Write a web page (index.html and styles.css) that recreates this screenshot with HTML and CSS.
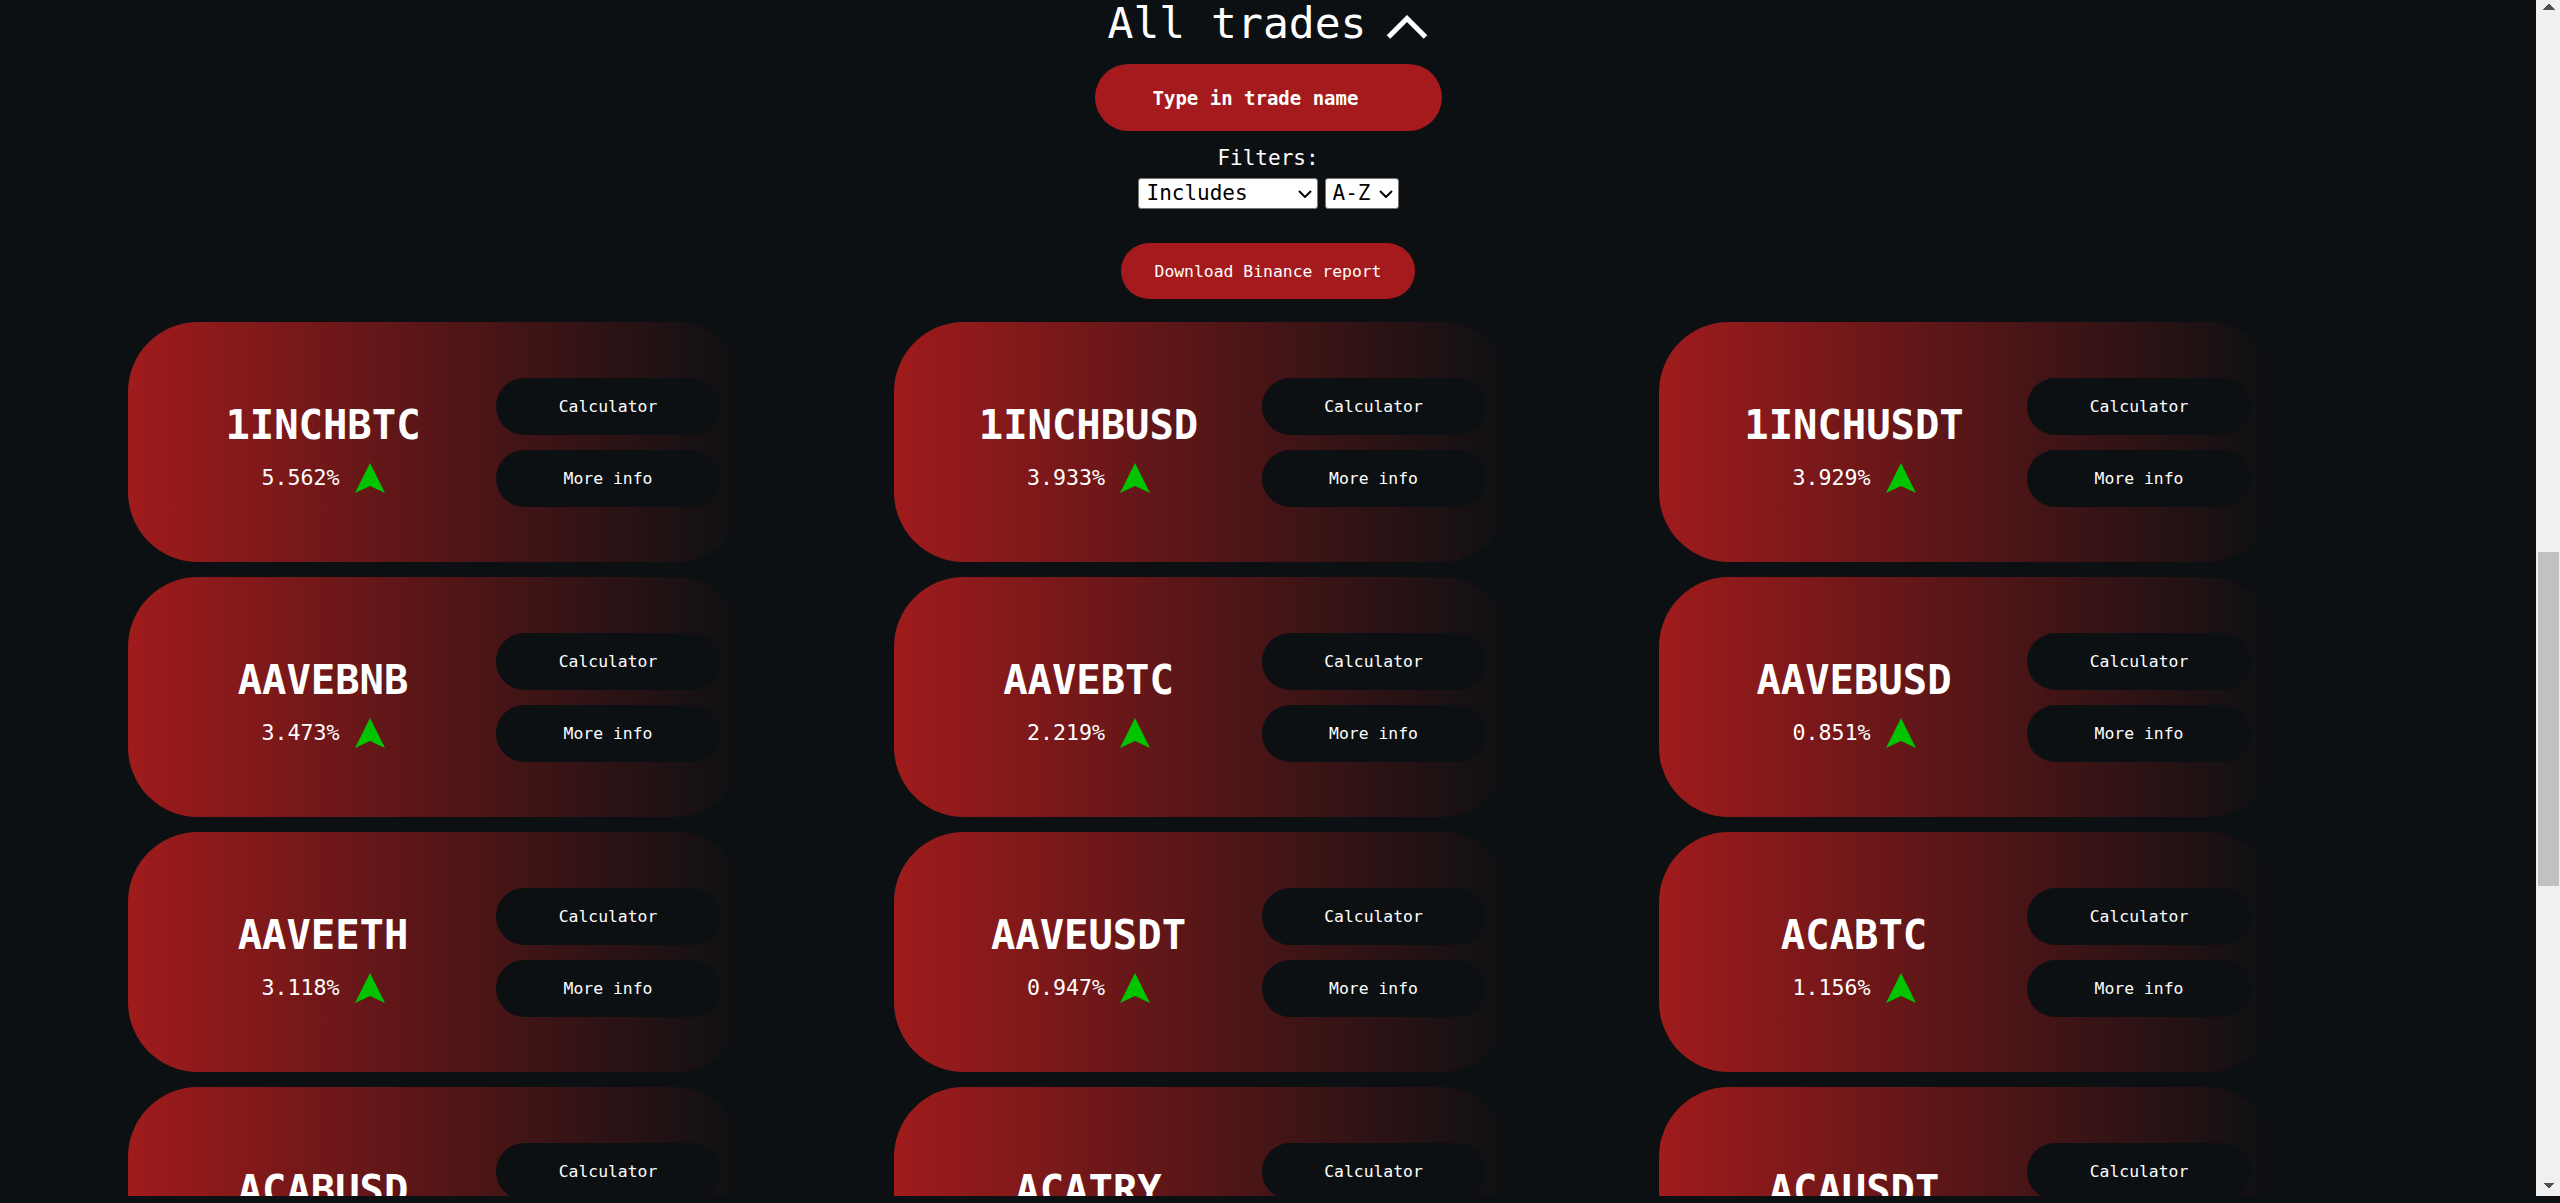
FILE: index.html
```html
<!DOCTYPE html>
<html lang="en">
<head>
<meta charset="utf-8">
<title>All trades</title>
<link rel="stylesheet" href="styles.css">
</head>
<body>
<div class="window">
  <main class="viewport">
    <section class="trades">
      <h2 class="trades-title"><span>All trades</span><svg class="chevron" viewBox="0 0 42 26" aria-hidden="true"><polyline points="2.5,23 21,4.5 39.5,23" fill="none" stroke="#fff" stroke-width="5" stroke-linejoin="miter" stroke-linecap="butt"/></svg></h2>
      <input class="search" type="text" placeholder="Type in trade name">
      <div class="filters-label">Filters:</div>
      <div class="filters">
        <span class="select-wrap">
          <select class="filter-select filter-type">
            <option>Includes</option>
            <option>Starts with</option>
            <option>Ends with</option>
          </select>
          <svg class="select-arrow" viewBox="0 0 14 8" aria-hidden="true"><polyline points="1,1 7,7 13,1" fill="none" stroke="#000" stroke-width="2"/></svg>
        </span>
        <span class="select-wrap">
          <select class="filter-select filter-order">
            <option>A-Z</option>
            <option>Z-A</option>
          </select>
          <svg class="select-arrow" viewBox="0 0 14 8" aria-hidden="true"><polyline points="1,1 7,7 13,1" fill="none" stroke="#000" stroke-width="2"/></svg>
        </span>
      </div>
      <button class="download" type="button">Download Binance report</button>

      <div class="grid">
        <div class="card">
          <div class="card-info"><div class="card-name">1INCHBTC</div><div class="card-change"><span>5.562%</span><svg class="trend-up" viewBox="0 0 30 30"><polygon points="15,0 30,30 15,23 0,30"/></svg></div></div>
          <div class="card-actions"><button class="card-btn" type="button">Calculator</button><button class="card-btn" type="button">More info</button></div>
        </div>
        <div class="card">
          <div class="card-info"><div class="card-name">1INCHBUSD</div><div class="card-change"><span>3.933%</span><svg class="trend-up" viewBox="0 0 30 30"><polygon points="15,0 30,30 15,23 0,30"/></svg></div></div>
          <div class="card-actions"><button class="card-btn" type="button">Calculator</button><button class="card-btn" type="button">More info</button></div>
        </div>
        <div class="card">
          <div class="card-info"><div class="card-name">1INCHUSDT</div><div class="card-change"><span>3.929%</span><svg class="trend-up" viewBox="0 0 30 30"><polygon points="15,0 30,30 15,23 0,30"/></svg></div></div>
          <div class="card-actions"><button class="card-btn" type="button">Calculator</button><button class="card-btn" type="button">More info</button></div>
        </div>

        <div class="card">
          <div class="card-info"><div class="card-name">AAVEBNB</div><div class="card-change"><span>3.473%</span><svg class="trend-up" viewBox="0 0 30 30"><polygon points="15,0 30,30 15,23 0,30"/></svg></div></div>
          <div class="card-actions"><button class="card-btn" type="button">Calculator</button><button class="card-btn" type="button">More info</button></div>
        </div>
        <div class="card">
          <div class="card-info"><div class="card-name">AAVEBTC</div><div class="card-change"><span>2.219%</span><svg class="trend-up" viewBox="0 0 30 30"><polygon points="15,0 30,30 15,23 0,30"/></svg></div></div>
          <div class="card-actions"><button class="card-btn" type="button">Calculator</button><button class="card-btn" type="button">More info</button></div>
        </div>
        <div class="card">
          <div class="card-info"><div class="card-name">AAVEBUSD</div><div class="card-change"><span>0.851%</span><svg class="trend-up" viewBox="0 0 30 30"><polygon points="15,0 30,30 15,23 0,30"/></svg></div></div>
          <div class="card-actions"><button class="card-btn" type="button">Calculator</button><button class="card-btn" type="button">More info</button></div>
        </div>

        <div class="card">
          <div class="card-info"><div class="card-name">AAVEETH</div><div class="card-change"><span>3.118%</span><svg class="trend-up" viewBox="0 0 30 30"><polygon points="15,0 30,30 15,23 0,30"/></svg></div></div>
          <div class="card-actions"><button class="card-btn" type="button">Calculator</button><button class="card-btn" type="button">More info</button></div>
        </div>
        <div class="card">
          <div class="card-info"><div class="card-name">AAVEUSDT</div><div class="card-change"><span>0.947%</span><svg class="trend-up" viewBox="0 0 30 30"><polygon points="15,0 30,30 15,23 0,30"/></svg></div></div>
          <div class="card-actions"><button class="card-btn" type="button">Calculator</button><button class="card-btn" type="button">More info</button></div>
        </div>
        <div class="card">
          <div class="card-info"><div class="card-name">ACABTC</div><div class="card-change"><span>1.156%</span><svg class="trend-up" viewBox="0 0 30 30"><polygon points="15,0 30,30 15,23 0,30"/></svg></div></div>
          <div class="card-actions"><button class="card-btn" type="button">Calculator</button><button class="card-btn" type="button">More info</button></div>
        </div>

        <div class="card">
          <div class="card-info"><div class="card-name">ACABUSD</div><div class="card-change"><span>1.204%</span><svg class="trend-up" viewBox="0 0 30 30"><polygon points="15,0 30,30 15,23 0,30"/></svg></div></div>
          <div class="card-actions"><button class="card-btn" type="button">Calculator</button><button class="card-btn" type="button">More info</button></div>
        </div>
        <div class="card">
          <div class="card-info"><div class="card-name">ACATRY</div><div class="card-change"><span>1.371%</span><svg class="trend-up" viewBox="0 0 30 30"><polygon points="15,0 30,30 15,23 0,30"/></svg></div></div>
          <div class="card-actions"><button class="card-btn" type="button">Calculator</button><button class="card-btn" type="button">More info</button></div>
        </div>
        <div class="card">
          <div class="card-info"><div class="card-name">ACAUSDT</div><div class="card-change"><span>1.098%</span><svg class="trend-up" viewBox="0 0 30 30"><polygon points="15,0 30,30 15,23 0,30"/></svg></div></div>
          <div class="card-actions"><button class="card-btn" type="button">Calculator</button><button class="card-btn" type="button">More info</button></div>
        </div>
      </div>
    </section>
  </main>
  <div class="scrollbar" aria-hidden="true">
    <div class="scroll-btn scroll-up"></div>
    <div class="scroll-track"><div class="scroll-thumb"></div></div>
    <div class="scroll-btn scroll-down"></div>
  </div>
</div>
</body>
</html>
```

FILE: styles.css
```css
html, body {
  margin: 0;
  height: 100%;
  background: #0c1012;
}

body {
  font-family: "DejaVu Sans Mono", "Liberation Mono", monospace;
  color: #ffffff;
  overflow: hidden;
}

.window {
  display: flex;
  height: calc(100vh - 7px);
}

.viewport {
  flex: 1;
  min-width: 0;
  overflow: hidden;
  background: #0c1012;
}

/* scrollbar drawn as in the reference */
.scrollbar {
  width: 24px;
  flex: none;
  display: flex;
  flex-direction: column;
  background: #f0f0f0;
}

.scroll-btn {
  height: 20px;
  flex: none;
  background-repeat: no-repeat;
  background-size: 6px 6px, 6px 6px;
}

.scroll-up {
  background-image:
    linear-gradient(to bottom right, transparent 50%, #505050 50%),
    linear-gradient(to bottom left, transparent 50%, #505050 50%);
  background-position: 7px 4px, 13px 4px;
}

.scroll-down {
  background-image:
    linear-gradient(to top right, transparent 50%, #505050 50%),
    linear-gradient(to top left, transparent 50%, #505050 50%);
  background-position: 7px 7px, 13px 7px;
}

.scroll-track {
  flex: 1;
  padding-top: 532px;
}

.scroll-thumb {
  height: 334px;
  margin: 0 1px 0 2px;
  background: #c1c1c1;
}

.trades {
  display: flex;
  flex-direction: column;
  align-items: center;
}

.trades-title {
  display: flex;
  align-items: flex-start;
  margin: 0;
  font-size: 43px;
  line-height: 46px;
  font-weight: 400;
}

.chevron {
  width: 42px;
  height: 26px;
  margin-left: 20px;
  margin-top: 14px;
}

.search {
  margin-top: 18px;
  width: 347px;
  height: 67px;
  box-sizing: border-box;
  border: 0;
  border-radius: 34px;
  background: #a51a1c;
  padding: 0 0 0 58px;
  font-family: "DejaVu Sans Mono", "Liberation Mono", monospace;
  font-size: 19px;
  font-weight: 700;
  color: #ffffff;
  outline: none;
}

.search::placeholder {
  color: #ffffff;
  opacity: 1;
}

.filters-label {
  margin-top: 15px;
  font-size: 21px;
  line-height: 24px;
}

.filters {
  margin-top: 8px;
  display: flex;
  gap: 7px;
}

.select-wrap {
  position: relative;
  display: block;
}

.filter-select {
  display: block;
  height: 31px;
  box-sizing: border-box;
  -webkit-appearance: none;
  appearance: none;
  font-family: "DejaVu Sans Mono", "Liberation Mono", monospace;
  font-size: 21px;
  line-height: 29px;
  color: #000000;
  background-color: #ffffff;
  border: 1px solid #767676;
  border-radius: 3px;
  padding: 0 0 0 8px;
  outline: none;
}

.select-arrow {
  position: absolute;
  right: 6px;
  top: 12px;
  width: 14px;
  height: 8px;
  pointer-events: none;
}

.filter-type {
  width: 180px;
}

.filter-order {
  width: 74px;
  padding-left: 7px;
}

.download {
  margin-top: 34px;
  width: 294px;
  height: 56px;
  border: 0;
  border-radius: 28px;
  background: #a51a1c;
  color: #ffffff;
  font-family: "DejaVu Sans Mono", "Liberation Mono", monospace;
  font-size: 16.4px;
  padding: 0;
  cursor: pointer;
}

.grid {
  align-self: stretch;
  margin-top: 23px;
  padding-left: 128px;
  display: grid;
  grid-template-columns: repeat(3, 617px);
  column-gap: 148.5px;
  row-gap: 15px;
}

.card {
  height: 240px;
  border-radius: 70px;
  background: linear-gradient(to right, #a01b1c 0%, #0c1012 100%);
  display: grid;
  grid-template-columns: 368px 224px;
  align-items: center;
}

.card-info {
  padding-left: 22px;
  padding-top: 10px;
  display: flex;
  flex-direction: column;
  align-items: center;
}

.card-name {
  font-size: 40.5px;
  font-weight: 700;
  line-height: 48px;
  white-space: nowrap;
}

.card-change {
  margin-top: 14px;
  display: flex;
  align-items: center;
  gap: 15px;
  height: 30px;
  font-size: 21.6px;
  line-height: 30px;
}

.trend-up {
  width: 30px;
  height: 30px;
  fill: #00c400;
}

.card-actions {
  display: flex;
  flex-direction: column;
  gap: 15px;
}

.card-btn {
  height: 57px;
  border: 0;
  border-radius: 28.5px;
  background: #0c1012;
  color: #ffffff;
  font-family: "DejaVu Sans Mono", "Liberation Mono", monospace;
  font-size: 16.4px;
  padding: 0;
  cursor: pointer;
}
```
